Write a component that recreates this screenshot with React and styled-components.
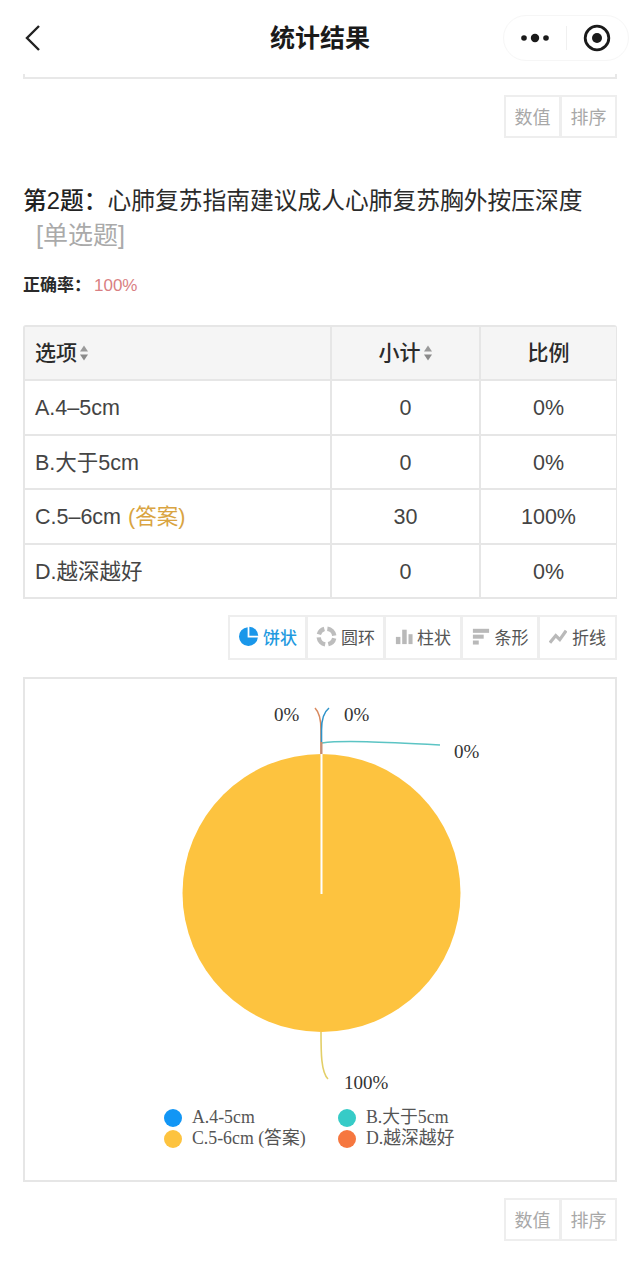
import React from "react";
import styled, { createGlobalStyle } from "styled-components";

const Global = createGlobalStyle`
  html, body { margin: 0; padding: 0; background: #fff; }
  body { font-family: "Liberation Sans", "Noto Sans CJK SC", sans-serif; color: #333; }
`;
const Page = styled.div`
  width: 640px; height: 1266px; overflow: hidden; display: flex; flex-direction: column;
`;
const NavBar = styled.header`
  height: 74px; flex: none; display: flex; align-items: center; justify-content: center; position: relative;
  background: #fff;
`;
const NavTitle = styled.h1`
  margin: 1px 0 0; font-size: 25px; font-weight: 700; color: #1a1a1a; line-height: 1.2;
`;
const BackIcon = styled.svg`
  position: absolute; left: 24px; top: 24px;
`;
const Capsule = styled.div`
  position: absolute; left: 503px; top: 15px; width: 126px; height: 46px; box-sizing: border-box;
  border: 1px solid #f6f6f6; border-radius: 23px; display: flex; align-items: center;
`;
const CapsuleSide = styled.div`
  flex: 1; height: 100%; display: flex; align-items: center; justify-content: center;
`;
const CapsuleDivider = styled.div`
  width: 1px; height: 24px; background: #f0f0f0;
`;
const Content = styled.main`
  padding: 0 23px; display: flex; flex-direction: column;
`;
const CardTail = styled.div`
  height: 5px; box-sizing: border-box; border: 2px solid #e8e8e8; border-top: 0;
`;
const Toolbar = styled.div`
  display: flex; justify-content: flex-end; margin-top: ${p => p.$top}px;
`;
const ToolGroup = styled.div`
  display: flex; gap: 3px; padding: 2px; background: #eeeeee;
`;
const ValueButton = styled.div`
  width: 53px; height: 39px; box-sizing: border-box; padding-bottom: 2px; background: #fff;
  display: flex; align-items: center; justify-content: center;
  font-size: 18px; white-space: nowrap; color: #a8a8a8;
`;
const ChartTab = styled.div`
  width: ${p => p.$w}px; height: 41px; box-sizing: border-box; padding-bottom: 3px; background: #fff;
  display: flex; align-items: center; justify-content: center; gap: ${p => p.$gap}px;
  font-size: 17px; white-space: nowrap;
  color: ${p => p.$active ? "#1f9ae0" : "#555"};
  font-weight: ${p => p.$active ? 500 : 400};
`;
const Question = styled.h2`
  margin: 46px 0 0; font-size: 23.75px; line-height: 34px; font-weight: 400; color: #2b2b2b;
`;
const QuestionNo = styled.span`
  font-weight: 500; color: #222;
`;
const QuestionType = styled.div`
  margin-left: 13px; color: #aaa; font-size: 25px;
`;
const Rate = styled.p`
  margin: 21px 0 0; font-size: 17px; line-height: 26px; font-weight: 700; color: #2a2a2a;
`;
const RateValue = styled.span`
  font-weight: 400; color: #d97f83; margin-left: 3px;
`;
const Table = styled.div`
  margin-top: 26px; border: 2px solid #e6e6e6; border-right-width: 1px; border-radius: 3px 3px 0 0;
  display: grid; grid-template-columns: 307px 149px 135px; box-sizing: border-box; width: 594px;
`;
const Cell = styled.div`
  height: ${p => p.$head ? 54 : p.$end ? 52.5 : 54.5}px; box-sizing: border-box; display: flex; align-items: center; gap: 2px;
  justify-content: ${p => p.$left ? "flex-start" : "center"};
  padding-left: ${p => p.$left ? 10 : 0}px;
  padding-top: ${p => p.$head ? 0 : 2}px;
  background: ${p => p.$head ? "#f5f5f5" : "#fff"};
  font-size: ${p => p.$head ? 21 : 21.5}px;
  line-height: 24px;
  font-weight: ${p => p.$head ? 500 : 400};
  color: ${p => p.$head ? "#2b2b2b" : "#444"};
  border-right: ${p => p.$last ? 0 : 2}px solid #e6e6e6;
  border-bottom: ${p => p.$end ? 0 : 2}px solid #e6e6e6;
`;
const Answer = styled.span`
  color: #d9a441; margin-left: 5px;
`;
const ChartBox = styled.section`
  margin-top: 17px; height: 505px; box-sizing: border-box; border: 2px solid #e6e6e6;
  display: flex; flex-direction: column;
`;
const ChartSvg = styled.svg`
  display: block; flex: none;
`;
const Legend = styled.div`
  margin-left: 139px; display: grid; grid-template-columns: 174px 1fr; grid-auto-rows: 21px;
  font-family: "Liberation Serif", "Noto Sans CJK SC", serif; font-size: 17.8px; color: #555;
`;
const LegendItem = styled.div`
  display: flex; align-items: center; gap: 10px; white-space: nowrap; line-height: 21px;
`;
const Dot = styled.span`
  width: 18px; height: 18px; border-radius: 50%; background: ${p => p.$c}; flex: none;
`;

const Caret = () => (
  <svg width="10" height="18" viewBox="0 0 10 18">
    <path d="M5 1.5 9 7.5H1z" fill="#9a9a9a" />
    <path d="M5 16.5 1 10.5H9z" fill="#8a8a8a" />
  </svg>
);
const PieIcon = () => (
  <svg width="21" height="21" viewBox="0 0 24 24">
    <path d="M11 1.300A10.800 10.800 0 1 0 22.700 13H11z" fill="#1a97ea" />
    <path d="M13 .8A10.600 10.600 0 0 1 23.200 11H13z" fill="#1a97ea" />
  </svg>
);
const RingIcon = () => (
  <svg width="21" height="21" viewBox="0 0 24 24" fill="none" stroke="#bdbdbd" strokeWidth="5">
    <path d="M13 3.100A9 9 0 0 1 20.900 11" />
    <path d="M20.800 14A9 9 0 0 1 14 20.800" />
    <path d="M10.500 20.900A9 9 0 0 1 3.100 13" />
    <path d="M3.300 9.500A9 9 0 0 1 9.500 3.300" />
  </svg>
);
const BarIcon = () => (
  <svg width="18" height="18" viewBox="0 0 20 20" fill="#b9b9b9">
    <rect x="1" y="11" width="5" height="8" />
    <rect x="8" y="3" width="5" height="16" />
    <rect x="15" y="8" width="4.500" height="11" />
  </svg>
);
const StripIcon = () => (
  <svg width="18" height="18" viewBox="0 0 20 20" fill="#b9b9b9">
    <rect x="1" y="2" width="18" height="4.500" />
    <rect x="1" y="8.500" width="12" height="4.500" />
    <rect x="1" y="15" width="6.500" height="4.500" />
  </svg>
);
const LineIcon = () => (
  <svg width="18" height="18" viewBox="0 0 20 20" fill="none" stroke="#b9b9b9" strokeWidth="3.600">
    <path d="M1 17.500 7.500 9.500 12 14 19 4" />
  </svg>
);

const ValueTools = ({ top }) => (
  <Toolbar $top={top}>
    <ToolGroup>
      <ValueButton>数值</ValueButton>
      <ValueButton>排序</ValueButton>
    </ToolGroup>
  </Toolbar>
);

const rows = [
  ["A.4–5cm", "0", "0%"],
  ["B.大于5cm", "0", "0%"],
  ["C.5–6cm", "30", "100%"],
  ["D.越深越好", "0", "0%"],
];
const LABEL = { fontFamily: '"Liberation Serif", serif', fontSize: 19, fill: "#333" };

export default function App() {
  return (
    <Page>
      <Global />
      <NavBar>
        <BackIcon width="18" height="28" viewBox="0 0 18 28" fill="none" stroke="#222" strokeWidth="2.400">
          <path d="M15 2 3 14l12 12" />
        </BackIcon>
        <NavTitle>统计结果</NavTitle>
        <Capsule>
          <CapsuleSide>
            <svg width="30" height="12" viewBox="0 0 30 12" fill="#1a1a1a">
              <circle cx="4" cy="6" r="2.800" /><circle cx="15" cy="6" r="4.200" /><circle cx="26" cy="6" r="2.800" />
            </svg>
          </CapsuleSide>
          <CapsuleDivider />
          <CapsuleSide>
            <svg width="28" height="28" viewBox="0 0 28 28">
              <circle cx="14" cy="14" r="11.800" fill="none" stroke="#1a1a1a" strokeWidth="2.800" />
              <circle cx="14" cy="14" r="5" fill="#1a1a1a" />
            </svg>
          </CapsuleSide>
        </Capsule>
      </NavBar>
      <Content>
        <CardTail />
        <ValueTools top={16} />
        <Question>
          <QuestionNo>第2题：</QuestionNo>心肺复苏指南建议成人心肺复苏胸外按压深度
          <QuestionType>[单选题]</QuestionType>
        </Question>
        <Rate>正确率：<RateValue>100%</RateValue></Rate>
        <Table>
          <Cell $head $left>选项<Caret /></Cell>
          <Cell $head>小计<Caret /></Cell>
          <Cell $head $last>比例</Cell>
          {rows.map((r, i) => (
            <React.Fragment key={r[0]}>
              <Cell $left $end={i === 3}>{r[0]}{i === 2 && <Answer>(答案)</Answer>}</Cell>
              <Cell $end={i === 3}>{r[1]}</Cell>
              <Cell $last $end={i === 3}>{r[2]}</Cell>
            </React.Fragment>
          ))}
        </Table>
        <Toolbar $top={16}>
          <ToolGroup>
            <ChartTab $w={75} $gap={4} $active><PieIcon />饼状</ChartTab>
            <ChartTab $w={75} $gap={4}><RingIcon />圆环</ChartTab>
            <ChartTab $w={74} $gap={4}><BarIcon />柱状</ChartTab>
            <ChartTab $w={74} $gap={5}><StripIcon />条形</ChartTab>
            <ChartTab $w={75} $gap={5}><LineIcon />折线</ChartTab>
          </ToolGroup>
        </Toolbar>
        <ChartBox>
          <ChartSvg width="590" height="428" viewBox="25 679 590 428">
            <circle cx="321.500" cy="893" r="139" fill="#fdc33f" />
            <path d="M321.500 754v140" stroke="#fff" strokeWidth="2" fill="none" />
            <path d="M315 708c4 4 6 10 6 22v24" stroke="#d98a5f" strokeWidth="1.600" fill="none" />
            <path d="M329 708c-5 4-7.500 10-7.500 22v12" stroke="#2f93c9" strokeWidth="1.600" fill="none" />
            <path d="M322 743c20-3 60-1 118 2" stroke="#5cc4c4" strokeWidth="1.600" fill="none" />
            <path d="M321.500 742v12" stroke="#c58a70" strokeWidth="2" fill="none" />
            <path d="M321 1032c0 20 0 40 7 47" stroke="#e3cf68" strokeWidth="1.600" fill="none" />
            <text x="274" y="721" {...LABEL}>0%</text>
            <text x="344" y="721" {...LABEL}>0%</text>
            <text x="454" y="758" {...LABEL}>0%</text>
            <text x="344" y="1089" {...LABEL}>100%</text>
          </ChartSvg>
          <Legend>
            <LegendItem><Dot $c="#1296f5" />A.4-5cm</LegendItem>
            <LegendItem><Dot $c="#36cbc7" />B.大于5cm</LegendItem>
            <LegendItem><Dot $c="#fdc33f" />C.5-6cm (答案)</LegendItem>
            <LegendItem><Dot $c="#f6773f" />D.越深越好</LegendItem>
          </Legend>
        </ChartBox>
        <ValueTools top={16} />
      </Content>
    </Page>
  );
}
